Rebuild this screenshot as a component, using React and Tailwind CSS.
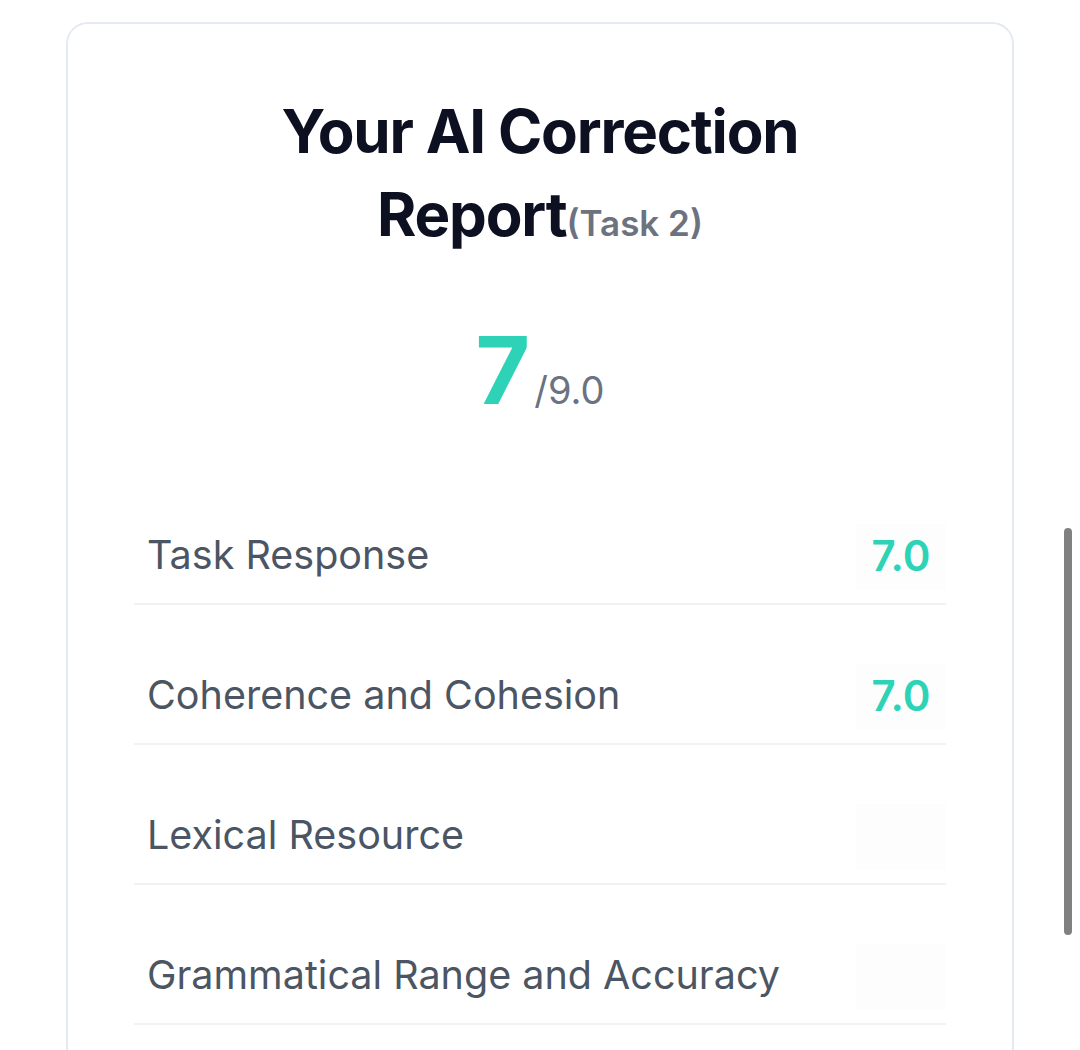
import React from 'react';

const SCORES = [
  { label: 'Task Response', value: '7.0' },
  { label: 'Coherence and Cohesion', value: '7.0' },
  { label: 'Lexical Resource', value: null },
  { label: 'Grammatical Range and Accuracy', value: null },
];

export default function App() {
  return (
    <div className="relative min-h-[1050px] bg-white px-[66px] pt-[22px] font-['Inter','Liberation_Sans',sans-serif]">
      <div className="rounded-[22px] border-2 border-[#e5eaf1] bg-white px-[66px] pt-[66px] pb-[80px]">
        {/* Title */}
        <h1 className="text-center text-[60px] font-bold leading-[83px] tracking-[-0.02em] text-[#0d1020]">
          Your AI Correction
          <br />
          Report
          <span className="text-[35px] font-semibold tracking-normal text-[#6b7280]">(Task 2)</span>
        </h1>

        {/* Overall band */}
        <div className="mt-[58px] flex items-baseline justify-center gap-[4px]">
          <span className="text-[94px] font-bold leading-none text-[#2ed3b7]">7</span>
          <span className="text-[38px] leading-none text-[#6b7280]">/9.0</span>
        </div>

        {/* Criteria */}
        <div className="mt-[48px] flex flex-col">
          {SCORES.map((s) => (
            <div
              key={s.label}
              className="flex h-[140px] items-center justify-between border-b-2 border-[#f1f2f4] pt-[44px] pl-[13px]"
            >
              <span className="text-[39.5px] leading-none text-[#4b5563]">{s.label}</span>
              <div className="flex h-[65px] w-[90px] items-center justify-center bg-[#fdfdfd]">
                {s.value && (
                  <span className="text-[42px] font-semibold leading-none text-[#2ed3b7]">{s.value}</span>
                )}
              </div>
            </div>
          ))}
        </div>
      </div>

      {/* scroll indicator */}
      <div className="absolute left-[1064px] top-[528px] h-[407px] w-[8px] rounded-full bg-[#808080]" />
    </div>
  );
}
